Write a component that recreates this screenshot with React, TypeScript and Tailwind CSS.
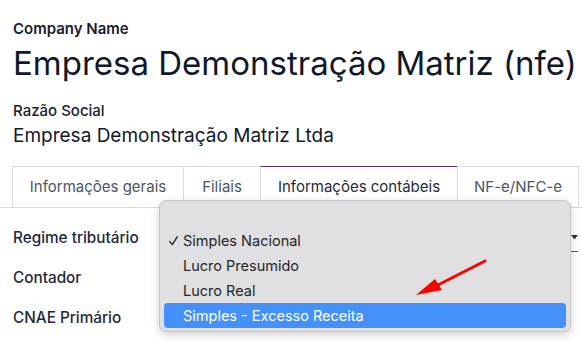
import React from "react";

const tabs = [
  { label: "Informações gerais", w: "w-[172px]", active: false },
  { label: "Filiais", w: "w-[78px]", active: false },
  { label: "Informações contábeis", w: "w-[198px]", active: true },
  { label: "NF-e/NFC-e", w: "w-[122px]", active: false },
];

const items = ["Simples Nacional", "Lucro Presumido", "Lucro Real", "Simples - Excesso Receita"];

export default function App() {
  return (
    <div
      className="relative w-[582px] h-[342px] overflow-hidden bg-white text-[#111827]"
      style={{ fontFamily: "Inter, 'Noto Sans', sans-serif" }}
    >
      <div className="pl-[13px] pt-[19px]">
        <div className="text-[15px] leading-[20px] font-semibold text-[#1a202c]">Company Name</div>
        <div className="mt-[4px] text-[33px] leading-[40px] whitespace-nowrap">Empresa Demonstração Matriz (nfe)</div>
        <div className="mt-[18px] text-[15px] leading-[20px] font-medium text-[#1a202c]">Razão Social</div>
        <div className="mt-[3px] text-[19px] leading-[24px] whitespace-nowrap">Empresa Demonstração Matriz Ltda</div>
      </div>

      <div className="mt-[18px] flex border-b border-[#d8dadd]">
        <div className="w-[13px] shrink-0" />
        {tabs.map((t) => (
          <div
            key={t.label}
            className={
              t.active
                ? `${t.w} shrink-0 h-[42px] -mb-px -ml-px flex items-center justify-center border-x border-t border-x-[#d8dadd] border-t-[#5c2d52] bg-white text-[15px] text-[#1f2937]`
                : `${t.w} shrink-0 h-[41px] -ml-px first:ml-0 flex items-center justify-center border-x border-t border-[#d8dadd] text-[15px] text-[#4b5563]`
            }
          >
            {t.label}
          </div>
        ))}
      </div>

      <div className="pl-[13px] pt-[10px] flex flex-col text-[15.3px] leading-[20px] font-medium text-[#1f2937]">
        <div className="h-[40px] flex items-center">
          <span className="w-[147px] shrink-0">Regime tributário</span>
          <div className="flex-1 mr-[4px] h-[28px] border-b border-[#017e84] flex items-center justify-end">
            <svg width="7" height="5" viewBox="0 0 7 5"><path d="M0 0h7L3.5 4.5z" fill="#333" /></svg>
          </div>
        </div>
        <div className="h-[40px] flex items-center">Contador</div>
        <div className="h-[40px] flex items-center">CNAE Primário</div>
      </div>

      {/* native popup menu */}
      <div className="absolute left-[159px] top-[200px] w-[412px] h-[132px] rounded-[7px] border border-[#c6c6c8] bg-[#e0dfe1] shadow-[0_3px_10px_rgba(0,0,0,0.18)] pt-[27px] px-[4px] text-[14.5px] text-[#262626]">
        {items.map((it, i) => (
          <div
            key={it}
            className={
              i === 3
                ? "relative h-[25px] rounded-[4px] bg-[#4491fb] text-white flex items-center pl-[19px]"
                : "relative h-[25px] flex items-center pl-[19px]"
            }
          >
            {i === 0 && (
              <svg className="absolute left-[5px] top-[8px]" width="9" height="10" viewBox="0 0 9 10">
                <path d="M0.8 5.6 L3.3 8.6 L8.2 0.8" fill="none" stroke="#262626" strokeWidth="1.4" strokeLinecap="round" strokeLinejoin="round" />
              </svg>
            )}
            {it}
          </div>
        ))}
      </div>

      {/* red annotation arrow */}
      <svg className="absolute left-0 top-0" width="582" height="342" viewBox="0 0 582 342">
        <line x1="485" y1="261" x2="434" y2="287" stroke="#ff0000" strokeWidth="3" strokeLinecap="round" />
        <polygon points="416,295 435,279 442,290" fill="#ff0000" />
      </svg>
    </div>
  );
}
